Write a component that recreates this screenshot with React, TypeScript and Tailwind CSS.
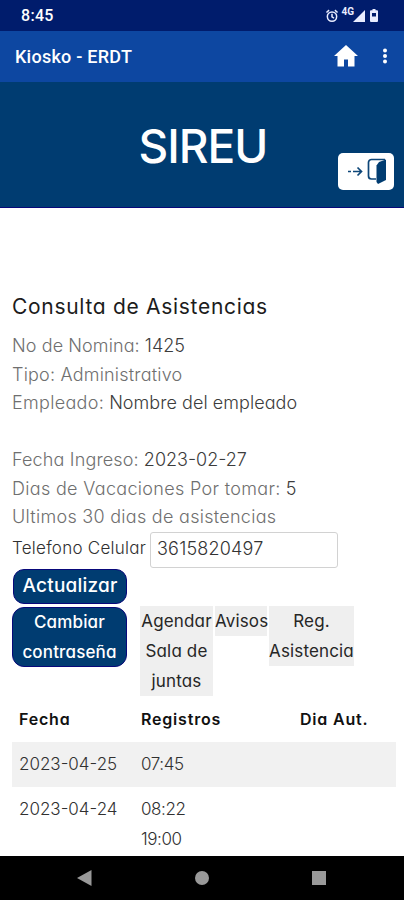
import React from "react";

interface InfoLineProps {
  label: string;
  value?: string;
  labelClass: string;
  valueClass?: string;
}

interface Attendance {
  date: string;
  records: string[];
}

const attendances: Attendance[] = [
  { date: "2023-04-25", records: ["07:45"] },
  { date: "2023-04-24", records: ["08:22", "19:00"] },
];

function StatusBar() {
  return (
    <div className="flex h-[31px] shrink-0 items-center justify-between bg-[#001c6c] pl-[21px] pr-[26px]">
      <span className="font-[Roboto] text-[16px] font-medium leading-none tracking-[0.3px] text-white">8:45</span>
      <div className="flex items-center text-[#e8ecff]">
        <svg width="14" height="14" viewBox="0 0 24 24" fill="none" stroke="currentColor" strokeWidth="2.6">
          <circle cx="12" cy="13" r="8" />
          <path d="M12 8v5.5l3.5 2M2.500 6 7 2M21.500 6 17 2" />
        </svg>
        <span className="-mr-px ml-[2px] mb-[7px] font-[Roboto] text-[10px] font-bold leading-none">4G</span>
        <svg width="12" height="12" viewBox="0 0 12 12" fill="currentColor">
          <path d="M12 0v12H0z" />
        </svg>
        <svg className="ml-[5px]" width="8" height="13" viewBox="0 0 8 13">
          <path fill="currentColor" fillRule="evenodd" d="M2.500 0h3v1.300H7a1 1 0 0 1 1 1V12a1 1 0 0 1-1 1H1a1 1 0 0 1-1-1V2.300a1 1 0 0 1 1-1h1.500zM2 4v3.500h4V4z" />
        </svg>
      </div>
    </div>
  );
}

function AppBar() {
  return (
    <div className="flex h-[51px] shrink-0 items-center justify-between bg-[#0d47a1] pl-[15px] pr-[16px]">
      <span className="font-[Roboto] text-[18px] font-medium leading-none tracking-[0.25px] text-white">Kiosko - ERDT</span>
      <div className="flex items-center pb-[2px] text-white">
        <svg width="24" height="22" viewBox="0 0 24 22" fill="currentColor">
          <path d="M12 0 0 11h3.500v10.500H10v-7h4v7h6.500V11H24z" />
        </svg>
        <svg className="ml-[24px] mt-px" width="6" height="16" viewBox="0 0 6 16" fill="currentColor">
          <circle cx="3" cy="2.500" r="2" />
          <circle cx="3" cy="8" r="2" />
          <circle cx="3" cy="13.500" r="2" />
        </svg>
      </div>
    </div>
  );
}

function Banner() {
  return (
    <header className="relative flex h-[126px] shrink-0 justify-center border-b border-[#08087a] bg-[#003c71] pt-[40px]">
      <h1 className="pl-[2px] text-[46px] font-medium leading-[48px] tracking-[-1px] text-white">SIREU</h1>
      <button className="absolute right-[10px] top-[71px] flex h-[37px] w-[56px] items-center justify-center rounded-[5px] bg-white">
        <svg width="56" height="37" viewBox="0 0 56 37" fill="none" stroke="#0d4678" strokeWidth="1.700">
          <path d="M10 18.500h3M15 18.500h8M19.500 14.500l4 4-4 4" />
          <path d="M47 6.500H33.500a3 3 0 0 0-3 3v13.500a3 3 0 0 0 3 3H38" />
          <path d="M48 6.500v20.500L40 31l-1.500-2V12.500L41 9z" fill="#003c71" stroke="none" />
        </svg>
      </button>
    </header>
  );
}

function InfoLine({ label, value, labelClass, valueClass }: InfoLineProps) {
  return (
    <p className="h-[28.500px] whitespace-pre text-[18px] font-light leading-[28.500px] text-[#6f6f6f]">
      <span className={labelClass}>{label}</span>
      {value && <span className={`font-[360] text-[#3c3c3c] ${valueClass}`}> {value}</span>}
    </p>
  );
}

export default function App() {
  return (
    <div className="flex h-[900px] w-[404px] flex-col overflow-hidden bg-white font-[Inter,sans-serif] [font-feature-settings:'cv11']">
      <StatusBar />
      <AppBar />
      <Banner />

      <main className="flex min-h-0 flex-1 flex-col overflow-hidden pl-[12px] pr-[8px] pt-[84px]">
        <h2 className="h-[40px] shrink-0 whitespace-nowrap text-[21px] font-[380] leading-[30px] tracking-[0.7px] text-[#1c1c1c]">
          Consulta de Asistencias
        </h2>

        <section className="shrink-0">
          <InfoLine label="No de Nomina:" value="1425" labelClass="tracking-[0.1px]" valueClass="tracking-[0px]" />
          <InfoLine label="Tipo: Administrativo" labelClass="tracking-[0.2px]" />
          <InfoLine label="Empleado:" value="Nombre del empleado" labelClass="tracking-[0.3px]" valueClass="tracking-[0.05px]" />
          <div className="h-[28.500px]" />
          <InfoLine label="Fecha Ingreso:" value="2023-02-27" labelClass="tracking-[0.15px]" valueClass="tracking-[0px]" />
          <InfoLine label="Dias de Vacaciones Por tomar:" value="5" labelClass="tracking-[0.32px]" valueClass="tracking-[0px]" />
          <InfoLine label="Ultimos 30 dias de asistencias" labelClass="tracking-[0.28px]" />
        </section>

        <div className="flex h-[36.500px] shrink-0 items-center">
          <label htmlFor="phone" className="w-[138px] whitespace-nowrap pb-[2px] text-[17px] font-light tracking-[0.25px] text-[#303030]">
            Telefono Celular
          </label>
          <input
            id="phone"
            className="h-[36px] w-[188px] rounded-[3px] border-[1.500px] border-[#d2d2d2] px-[6px] pb-[2px] text-[18px] font-light tracking-[0.2px] text-[#333] outline-none"
            defaultValue="3615820497"
          />
        </div>

        <button className="ml-[1px] mt-px h-[35px] w-[114px] shrink-0 rounded-[11px] border border-[#08087a] bg-[#003c71] text-[19px] font-medium tracking-[0.2px] text-white">
          Actualizar
        </button>

        <div className="mt-[2px] flex h-[91px] shrink-0 items-start text-center text-[17px] font-[380] leading-[30px] tracking-[0.15px] text-[#262626]">
          <button className="mt-px h-[60px] w-[115px] rounded-[12px] border border-[#08087a] bg-[#003c71] pb-[4px] font-medium leading-[29.500px] text-white">
            Cambiar
            <br />
            contraseña
          </button>
          <button className="ml-[13px] w-[73px] whitespace-nowrap bg-[#efefef]">
            Agendar
            <br />
            Sala de
            <br />
            juntas
          </button>
          <button className="ml-[2px] w-[52px] bg-[#efefef]">Avisos</button>
          <button className="ml-[2px] w-[85px] whitespace-nowrap bg-[#efefef]">
            Reg.
            <br />
            Asistencia
          </button>
        </div>

        <table className="w-[384px] table-fixed text-left text-[16px] leading-[30px] text-[#303030]">
          <colgroup>
            <col className="w-[122px]" />
            <col className="w-[159px]" />
            <col />
          </colgroup>
          <thead>
            <tr className="h-[45px] tracking-[0.8px] text-[#111]">
              <th className="px-[7px] pb-[2px] font-semibold">Fecha</th>
              <th className="px-[7px] pb-[2px] font-semibold">Registros</th>
              <th className="px-[7px] pb-[2px] font-semibold">Dia Aut.</th>
            </tr>
          </thead>
          <tbody>
            {attendances.map((a) => (
              <tr key={a.date} className="align-top odd:bg-[#f1f1f1]">
                <td className="px-[7px] pb-[8.500px] pt-[6.500px] text-[17px] font-light">{a.date}</td>
                <td className="px-[7px] pb-[8.500px] pt-[6.500px] text-[17px] font-light tracking-[-0.4px]">
                  {a.records.map((r) => (
                    <div key={r}>{r}</div>
                  ))}
                </td>
                <td />
              </tr>
            ))}
          </tbody>
        </table>
      </main>

      <nav className="flex h-[44px] shrink-0 items-center bg-black pl-[77px] text-[#999]">
        <svg width="15" height="16" viewBox="0 0 15 16" fill="currentColor">
          <path d="M14.500 0v16L0 8z" />
        </svg>
        <div className="ml-[103px] h-[14px] w-[14px] rounded-full bg-[#999]" />
        <div className="ml-[103px] h-[14px] w-[14px] bg-[#999]" />
      </nav>
    </div>
  );
}
